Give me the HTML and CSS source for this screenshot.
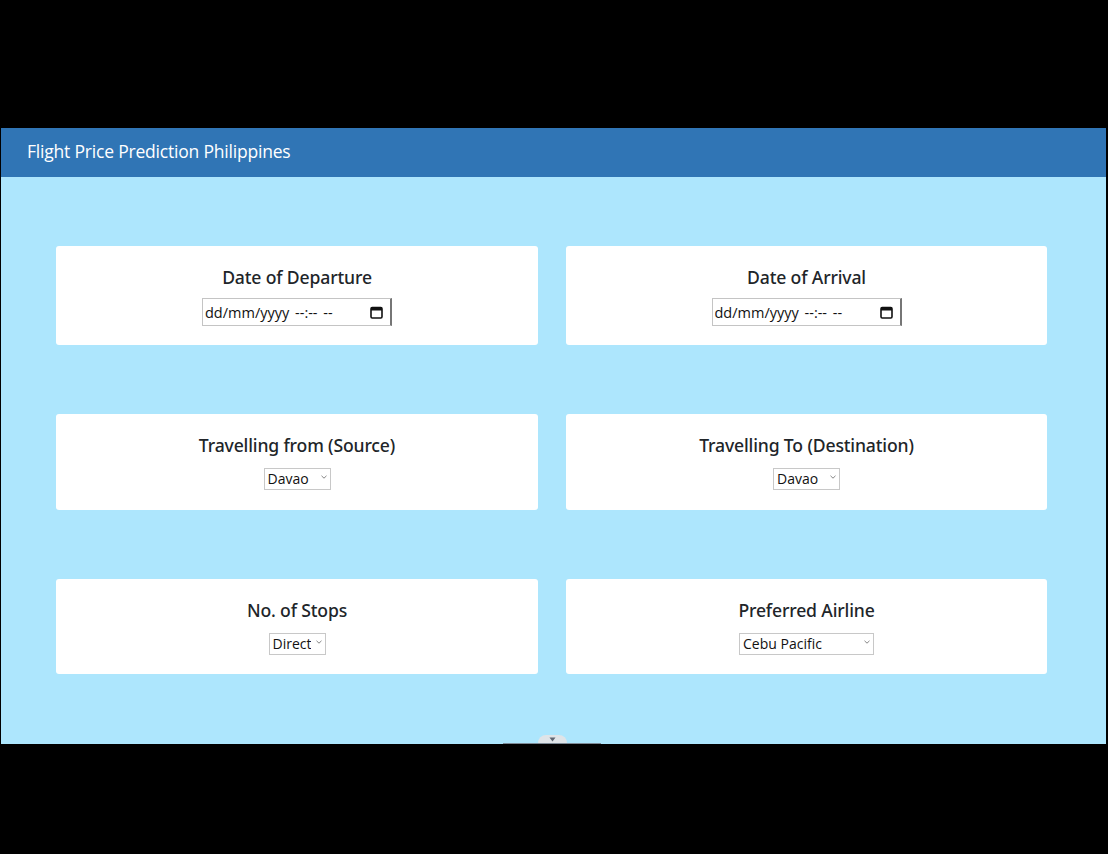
FILE: index.html
```html
<!DOCTYPE html>
<html lang="en">
<head>
<meta charset="utf-8">
<title>Flight Price Prediction Philippines</title>
<link rel="stylesheet" href="styles.css">
</head>
<body>
<div class="screen">
  <div class="app">
    <header class="topbar">Flight Price Prediction Philippines</header>
    <main class="grid">
      <section class="card card-date">
        <h2 class="label">Date of Departure</h2>
        <div class="fake-date"><span>dd/mm/yyyy --:-- --</span>
          <svg class="cal" width="13" height="13" viewBox="0 0 13 13"><rect x="1" y="1.5" width="11" height="10.5" rx="1.2" fill="none" stroke="#111" stroke-width="1.6"/><rect x="1" y="1.5" width="11" height="3" fill="#111"/></svg>
        </div>
      </section>
      <section class="card card-date">
        <h2 class="label">Date of Arrival</h2>
        <div class="fake-date"><span>dd/mm/yyyy --:-- --</span>
          <svg class="cal" width="13" height="13" viewBox="0 0 13 13"><rect x="1" y="1.5" width="11" height="10.5" rx="1.2" fill="none" stroke="#111" stroke-width="1.6"/><rect x="1" y="1.5" width="11" height="3" fill="#111"/></svg>
        </div>
      </section>
      <section class="card card-mid">
        <h2 class="label">Travelling from (Source)</h2>
        <div class="sel sel-davao"><select><option>Davao</option><option>Manila</option><option>Cebu</option></select>
          <svg class="chev" width="6" height="4" viewBox="0 0 6 4"><path d="M0.5 0.8 L3 3.2 L5.5 0.8" fill="none" stroke="#777" stroke-width="0.9"/></svg></div>
      </section>
      <section class="card card-mid">
        <h2 class="label">Travelling To (Destination)</h2>
        <div class="sel sel-davao"><select><option>Davao</option><option>Manila</option><option>Cebu</option></select>
          <svg class="chev" width="6" height="4" viewBox="0 0 6 4"><path d="M0.5 0.8 L3 3.2 L5.5 0.8" fill="none" stroke="#777" stroke-width="0.9"/></svg></div>
      </section>
      <section class="card card-low">
        <h2 class="label">No. of Stops</h2>
        <div class="sel sel-direct"><select><option>Direct</option><option>1 Stop</option></select>
          <svg class="chev" width="6" height="4" viewBox="0 0 6 4"><path d="M0.5 0.8 L3 3.2 L5.5 0.8" fill="none" stroke="#777" stroke-width="0.9"/></svg></div>
      </section>
      <section class="card card-low">
        <h2 class="label">Preferred Airline</h2>
        <div class="sel sel-airline"><select><option>Cebu Pacific</option><option>Philippine Airlines</option></select>
          <svg class="chev" width="6" height="4" viewBox="0 0 6 4"><path d="M0.5 0.8 L3 3.2 L5.5 0.8" fill="none" stroke="#777" stroke-width="0.9"/></svg></div>
      </section>
    </main>
    <div class="scroll-hint"><span class="pill"><svg width="7" height="5" viewBox="0 0 7 5"><path d="M0.5 0.5 H6.5 L3.5 4.5 Z" fill="#5f6673"/></svg></span></div>
  </div>
</div>
</body>
</html>
```
FILE: styles.css
```css
html, body {
  margin: 0;
  padding: 0;
  background: #000;
}
.screen {
  width: 1108px;
  height: 854px;
  padding-top: 128px;
  box-sizing: border-box;
}
.app {
  position: relative;
  margin-left: 1px;
  width: 1105px;
  height: 616px;
  background: #ade6fd;
  font-family: "Open Sans", "Noto Sans", sans-serif;
  overflow: hidden;
}
.topbar {
  height: 49px;
  box-sizing: border-box;
  background: #3075b5;
  color: #fff;
  font-size: 17.5px;
  line-height: 46px;
  padding-left: 26px;
  letter-spacing: -0.2px;
}
.grid {
  display: grid;
  grid-template-columns: 482px 481px;
  column-gap: 28px;
  row-gap: 69px;
  padding: 69px 0 0 55px;
}
.card {
  background: #fff;
  border-radius: 3px;
  display: flex;
  flex-direction: column;
  align-items: center;
  box-sizing: border-box;
}
.card-date { height: 99px; padding-top: 19px; }
.card-mid { height: 96px; padding-top: 19px; }
.card-low { height: 95px; padding-top: 19px; }
.label {
  margin: 0;
  font-family: "Noto Sans", "Open Sans", sans-serif;
  font-size: 17.6px;
  font-weight: 500;
  color: #212529;
  line-height: 24px;
  letter-spacing: -0.15px;
}
.card-date .label { margin-bottom: 9px; }
.card-mid .label { margin-bottom: 10px; }
.card-low .label { margin-bottom: 10px; }
.fake-date {
  width: 190px;
  height: 28px;
  box-sizing: border-box;
  border: 1px solid #c4c4c4;
  border-right: 2px solid #767676;
  display: flex;
  align-items: center;
  justify-content: space-between;
  padding: 0 7px 0 2px;
  font-size: 14.5px;
  color: #111;
  word-spacing: 2px;
}
.cal { display: block; }
.sel {
  position: relative;
  height: 22px;
}
.sel select {
  appearance: none;
  -webkit-appearance: none;
  height: 22px;
  box-sizing: border-box;
  border: 1px solid #c8c8c8;
  border-radius: 0;
  background: #fff;
  font-family: "Open Sans", "Noto Sans", sans-serif;
  font-size: 14px;
  color: #111;
  padding: 0 14px 0 3px;
  line-height: 20px;
}
.sel-davao select { width: 67px; }
.sel-direct select { width: 57px; }
.sel-airline select { width: 135px; }
.chev {
  position: absolute;
  right: 4px;
  top: 8px;
  pointer-events: none;
}
.scroll-hint {
  position: absolute;
  left: 502px;
  bottom: 0;
  width: 98px;
  height: 8px;
  display: flex;
  justify-content: center;
  align-items: flex-end;
  border-bottom: 1px solid #7d8a96;
  box-sizing: border-box;
}
.pill {
  width: 29px;
  height: 8px;
  background: #dfe4e8;
  border-radius: 8px 8px 0 0;
  display: flex;
  justify-content: center;
  align-items: flex-start;
  padding-top: 2px;
  box-sizing: border-box;
}
```
